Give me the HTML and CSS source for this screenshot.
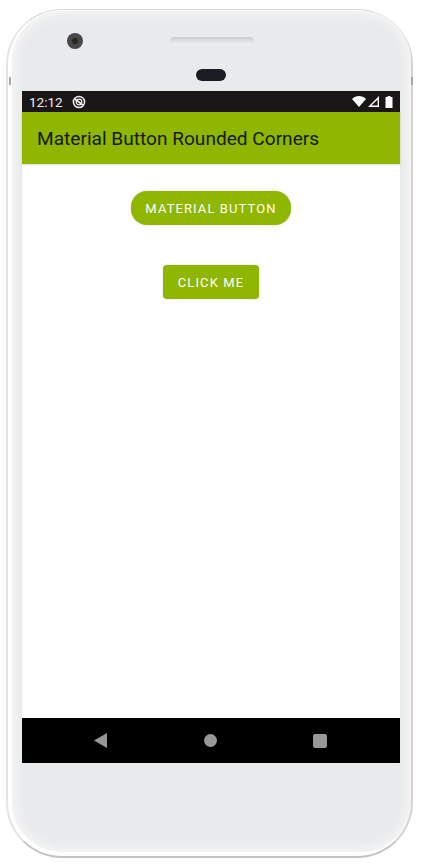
FILE: index.html
```html
<!DOCTYPE html>
<html>
<head>
    <meta charset="UTF-8">
    <meta name="viewport" content="width=device-width, initial-scale=1.0">
    <title>Material Button Rounded Corners</title>
    <link rel="stylesheet" href="styles.css">
</head>
<body>
    <div class="phone">
        <div class="phone-body">
            <div class="bezel-top">
                <div class="bezel-row">
                    <div class="camera"><span class="lens"></span></div>
                    <div class="speaker"></div>
                </div>
                <div class="sensor"></div>
            </div>

            <div class="screen">
                <div class="status-bar">
                    <span class="clock">12:12</span>
                    <svg class="dnd" width="14" height="14" viewBox="0 0 14 14">
                        <circle cx="7" cy="7" r="5.6" fill="none" stroke="#f2f2f2" stroke-width="1.5"/>
                        <circle cx="7" cy="7" r="2.8" fill="none" stroke="#f2f2f2" stroke-width="1.2"/>
                        <path d="M3 4L10.8 10.2" stroke="#f2f2f2" stroke-width="1.6"/>
                    </svg>
                    <div class="status-icons">
                        <svg class="wifi" width="14" height="11" viewBox="0 0 14 11"><path d="M0 3C3.8 -1 10.2 -1 14 3L7 11Z" fill="#fff"/></svg>
                        <svg class="signal" width="11" height="11" viewBox="0 0 11 11"><path d="M11 0V11H0ZM9.6 3.4L3.4 9.6H9.6Z" fill="#fff" fill-rule="evenodd"/></svg>
                        <svg class="battery" width="8" height="12" viewBox="0 0 8 12"><path d="M2.6 0H5.4V1H7.5V12H0.5V1H2.6Z" fill="#fff"/></svg>
                    </div>
                </div>
                <div class="app-bar">Material Button Rounded Corners</div>
                <div class="content">
                    <button class="btn btn-round">MATERIAL BUTTON</button>
                    <button class="btn">CLICK ME</button>
                </div>
                <div class="nav-bar">
                    <svg width="13" height="15" viewBox="0 0 13 15"><path d="M13 0V15L0 7.5Z" fill="#989898"/></svg>
                    <span class="nav-circle"></span>
                    <span class="nav-square"></span>
                </div>
            </div>
        </div>
    </div>
</body>
</html>
```

FILE: styles.css
```css
html, body {
    height: 100%;
}

body {
    margin: 0;
    background: #fff;
    font-family: Roboto, "Liberation Sans", sans-serif;
    overflow: hidden;
}

.phone {
    position: relative;
    width: 407px;
    height: 849px;
    margin: 9px 0 0 6px;
    padding: 1px 0 4px 4px;
    box-sizing: border-box;
    border-top: 1px solid #dcd5d8;
    border-bottom: 2px solid #c4c2c3;
    border-left: 2px solid #e6e3e4;
    border-right: 2px solid #d6d2d4;
    border-radius: 56px;
    background: #fff;
}

/* side button marks */
.phone::before,
.phone::after {
    content: "";
    position: absolute;
    top: 67px;
    width: 2px;
    height: 8px;
    background: #a9a7a8;
}

.phone::before {
    left: 1px;
}

.phone::after {
    right: -2px;
}

.phone-body {
    height: 100%;
    padding: 0 11px 0 10px;
    box-sizing: border-box;
    display: flex;
    flex-direction: column;
    background: #e9eaec;
    border-radius: 50px;
    box-shadow: inset 0 0 10px 4px #f5f5f6;
}

.bezel-top {
    height: 80px;
    padding-top: 22px;
    box-sizing: border-box;
}

.bezel-row {
    display: flex;
    align-items: center;
    height: 16px;
}

.camera {
    width: 16px;
    height: 16px;
    margin-left: 45px;
    display: flex;
    align-items: center;
    justify-content: center;
    background: #46484c;
    border-radius: 50%;
}

.lens {
    width: 6px;
    height: 6px;
    background: #2a2618;
    border-radius: 50%;
}

.speaker {
    width: 84px;
    height: 8px;
    margin-left: 87px;
    background: linear-gradient(#c9cbce, #e2e3e5 60%, #f1f1f2);
    border-radius: 4px;
}

.sensor {
    width: 30px;
    height: 12px;
    margin: 20px 0 0 174px;
    background: #1c1d22;
    border-radius: 6px;
}

.screen {
    width: 378px;
    height: 672px;
    display: flex;
    flex-direction: column;
    background: #fff;
}

.status-bar {
    height: 21px;
    padding: 0 7px;
    display: flex;
    align-items: center;
    background: #1a1617;
    color: #ececec;
    font-size: 13.5px;
}

.dnd {
    margin-left: 9px;
}

.status-icons {
    margin-left: auto;
    display: flex;
    align-items: center;
}

.signal {
    margin: 0 6px 0 2px;
}

.app-bar {
    height: 52px;
    padding-left: 15px;
    display: flex;
    align-items: center;
    background: #8fb600;
    color: #141a00;
    font-size: 19.1px;
    box-shadow: 0 1px 2px rgba(0,0,0,0.15);
}

.content {
    flex: 1;
    padding-top: 27px;
    display: flex;
    flex-direction: column;
    align-items: center;
    gap: 40px;
}

.btn {
    height: 34px;
    padding: 0 15px;
    border: none;
    border-radius: 4px;
    background: #8fb600;
    color: #fff;
    font-family: inherit;
    font-size: 13px;
    letter-spacing: 1.1px;
    box-shadow: 0 0 2px rgba(0,0,0,0.2);
}

.btn-round {
    padding: 0 14px;
    border-radius: 16px;
}

.nav-bar {
    height: 45px;
    padding-left: 72px;
    display: flex;
    align-items: center;
    gap: 97px;
    background: #000;
}

.nav-circle {
    width: 13px;
    height: 13px;
    background: #989898;
    border-radius: 50%;
}

.nav-square {
    width: 14px;
    height: 14px;
    margin-left: -1px;
    background: #989898;
    border-radius: 2px;
}
```
